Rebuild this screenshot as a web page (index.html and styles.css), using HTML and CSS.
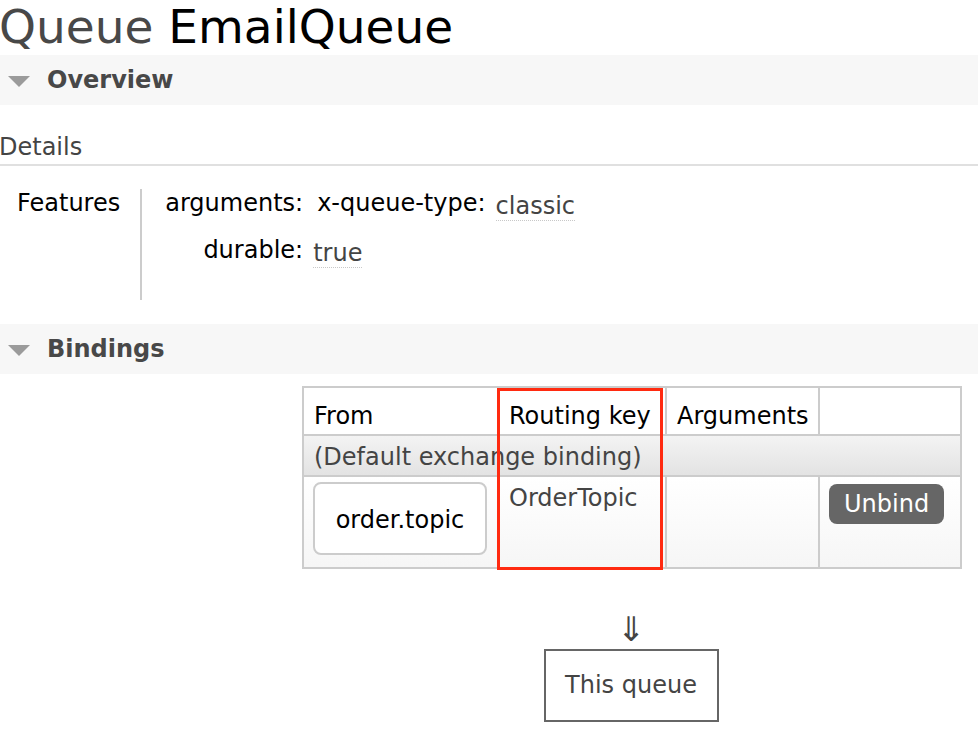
FILE: index.html
```html
<!DOCTYPE html>
<html>
<head>
<meta charset="utf-8">
<link rel="stylesheet" href="styles.css">
</head>
<body>
<h1 class="title"><span class="title-pre">Queue</span> EmailQueue</h1>

<section class="section">
  <div class="section-head"><span class="tri"></span><span>Overview</span></div>
  <h3 class="sub">Details</h3>
  <div class="features">
    <div class="flabel">Features</div>
    <div class="fgrid">
      <div class="fkey">arguments:</div>
      <div class="fval">
        <div class="nested">
          <span class="fkey">x-queue-type:</span>
          <span class="val">classic</span>
        </div>
      </div>
      <div class="fkey">durable:</div>
      <div class="fval"><span class="val">true</span></div>
    </div>
  </div>
</section>

<section class="section">
  <div class="section-head"><span class="tri"></span><span>Bindings</span></div>
  <div class="bindings">
    <div class="table-wrap">
      <table class="btable">
        <colgroup>
          <col class="c-from">
          <col class="c-key">
          <col class="c-args">
          <col class="c-act">
        </colgroup>
        <thead>
          <tr><th>From</th><th>Routing key</th><th>Arguments</th><th></th></tr>
        </thead>
        <tbody>
          <tr class="default-row"><td colspan="4">(Default exchange binding)</td></tr>
          <tr class="data-row">
            <td class="from-cell"><span class="exch">order.topic</span></td>
            <td class="key-cell">OrderTopic</td>
            <td></td>
            <td class="act-cell"><span class="btn">Unbind</span></td>
          </tr>
        </tbody>
      </table>
      <div class="highlight"></div>
    </div>
    <div class="flow">
      <div class="arrow">⇓</div>
      <div class="this-queue">This queue</div>
    </div>
  </div>
</section>
</body>
</html>
```

FILE: styles.css
```css
html, body {
  margin: 0;
  padding: 0;
  background: #fff;
}
body {
  font-family: "DejaVu Sans", Verdana, sans-serif;
  font-size: 24px;
  line-height: 28px;
  color: #000;
  overflow: hidden;
  width: 978px;
}
.title {
  margin: 0 0 1px -1px;
  font-size: 47px;
  line-height: 54px;
  font-weight: normal;
  color: #000;
  white-space: nowrap;
}
.title-pre {
  color: #484848;
}
.section-head {
  height: 50px;
  background: #f7f7f7;
  display: flex;
  align-items: center;
  font-weight: bold;
  color: #484848;
}
.tri {
  width: 0;
  height: 0;
  border-left: 11px solid transparent;
  border-right: 11px solid transparent;
  border-top: 11px solid #9b9b9b;
  margin: 2px 17px 0 8px;
}
.sub {
  margin: 28px 0 0 -1px;
  padding-bottom: 3px;
  font-size: 24px;
  line-height: 28px;
  font-weight: normal;
  color: #444;
  border-bottom: 2px solid #e0e0e0;
}
.features {
  display: flex;
  align-items: flex-start;
  margin-top: 23px;
  margin-bottom: 24px;
}
.flabel {
  padding: 0 20px 0 17px;
  border-right: 2px solid #ccc;
  height: 111px;
}
.fgrid {
  display: grid;
  grid-template-columns: auto auto;
  align-content: start;
  column-gap: 10px;
  row-gap: 19px;
  padding-left: 23px;
  align-items: start;
}
.fkey {
  text-align: right;
}
.nested {
  display: flex;
  gap: 10px;
  padding-left: 4px;
}
.val {
  color: #444;
  display: inline-block;
  transform: translateY(3px);
  text-decoration: underline dotted #c8c8c8;
  text-underline-offset: 6px;
  text-decoration-thickness: 1px;
}
.bindings {
  padding: 12px 0 0 302px;
  width: 658px;
}
.table-wrap {
  position: relative;
  width: 658px;
}
.btable {
  width: 658px;
  border-collapse: collapse;
  table-layout: fixed;
  border: 2px solid #ccc;
}
.c-from { width: 195px; }
.c-key { width: 168px; }
.c-args { width: 153px; }
.c-act { width: 142px; }
.btable th {
  font-weight: normal;
  text-align: left;
  padding: 14px 10px 4px 10px;
  border: 2px solid #ccc;
  white-space: nowrap;
  background: #fff;
}
.btable td {
  border: 2px solid #ccc;
  padding: 5px 10px;
  vertical-align: top;
}
.default-row td {
  padding: 7px 10px 4px 10px;
  color: #444;
  background: linear-gradient(#f3f3f3, #e3e3e3);
  white-space: nowrap;
}
.data-row td {
  background: linear-gradient(#ffffff, #f6f6f6);
}
.data-row td.from-cell {
  padding: 5px 8px 12px 9px;
}
.data-row td.key-cell {
  padding-top: 7px;
  color: #444;
}
.data-row td.act-cell {
  padding: 7px 8px 10px 9px;
}
.exch {
  display: block;
  width: 170px;
  padding: 22px 0 19px 0;
  text-align: center;
  border: 2px solid #ccc;
  border-radius: 8px;
  background: #fff;
}
.btn {
  display: inline-block;
  background: #666;
  color: #fff;
  border-radius: 8px;
  padding: 6px 15px;
  line-height: 28px;
}
.highlight {
  position: absolute;
  left: 195px;
  top: 2px;
  width: 160px;
  height: 176px;
  border: 3px solid #ff2a10;
}
.flow {
  display: flex;
  flex-direction: column;
  align-items: center;
  padding-top: 40px;
}
.arrow {
  font-size: 34px;
  line-height: 40px;
  color: #444;
}
.this-queue {
  width: 171px;
  padding: 20px 0 21px;
  text-align: center;
  border: 2px solid #666;
  color: #444;
}
```
